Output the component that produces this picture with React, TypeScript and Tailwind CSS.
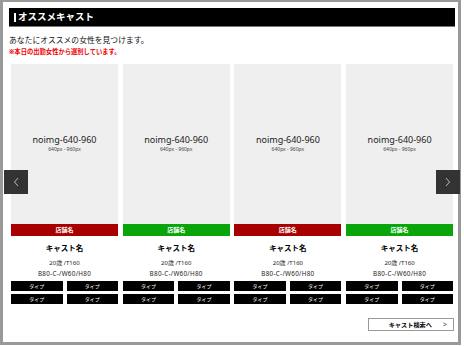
import React from "react";

const font = { fontFamily: '"Noto Sans", "Noto Sans CJK JP", sans-serif' };

function Card({ color }: { color: string }) {
  return (
    <div className="w-[107px] flex flex-col">
      <div className="h-[160px] bg-[#efefef] flex flex-col items-center pt-[70px]">
        <div className="text-[9px] leading-[12px] text-[#222]">noimg-640-960</div>
        <div className="text-[5px] leading-[7px] text-[#444] mt-[0px]">640px - 960px</div>
      </div>
      <div className={`h-[12px] ${color} text-white text-[6px] leading-[12px] font-bold text-center`}>店舗名</div>
      <div className="text-[7.5px] leading-[10px] font-bold text-center mt-[7px] text-black">キャスト名</div>
      <div className="text-[6px] leading-[10px] text-center mt-[5px] text-[#222]">20歳 /T160</div>
      <div className="text-[6.3px] leading-[10px] text-center mt-[1px] text-[#222] tracking-[0.3px]">B80-C-/W60/H80</div>
      <div className="grid grid-cols-2 gap-x-[4px] gap-y-[3px] mt-[2px]">
        {[0, 1, 2, 3].map((i) => (
          <div key={i} className="h-[10px] bg-black text-white text-[5px] leading-[10px] text-center">タイプ</div>
        ))}
      </div>
    </div>
  );
}

export default function App() {
  return (
    <div className="w-[464px] h-[346px] bg-white relative" style={font}>
      <div className="w-[461px] h-[345px] border-l-[3px] border-r-[3px] border-t-[2px] border-b-[3px] border-[#999] pl-[6px] pt-[6px]">
        <div className="w-[446px] h-[19px] bg-black border-b border-[#777] flex items-center pl-[5px]">
          <div className="w-[2px] h-[9px] bg-white mr-[2px]" />
          <div className="text-white text-[9.5px] font-bold leading-[14px]">オススメキャスト</div>
        </div>
        <div className="text-[7.8px] leading-[10px] text-[#111] mt-[8px]">あなたにオススメの女性を見つけます。</div>
        <div className="text-[6.3px] leading-[8px] font-bold text-[#e00] mt-[3px]">※本日の出勤女性から選別しています。</div>
        <div className="flex gap-[4.7px] ml-[2px] mt-[8px]">
          <Card color="bg-[#a80000]" />
          <Card color="bg-[#0aa50a]" />
          <Card color="bg-[#a80000]" />
          <Card color="bg-[#0aa50a]" />
        </div>
        <div className="flex justify-end pr-[4px] mt-[14px]">
          <div className="w-[86px] h-[13px] border border-[#999] bg-white flex items-center justify-end pr-[6px] gap-[11px]">
            <span className="text-[6.2px] font-bold leading-[10px] text-black">キャスト検索へ</span>
            <span className="text-[7px] leading-[10px] text-[#444]">&gt;</span>
          </div>
        </div>
      </div>
      <div className="absolute left-[4px] top-[170px] w-[24px] h-[24px] bg-[#333] flex items-center justify-center">
        <svg width="6" height="10" viewBox="0 0 6 10"><path d="M5 1 L1.5 5 L5 9" stroke="#bbb" strokeWidth="1" fill="none" /></svg>
      </div>
      <div className="absolute left-[436px] top-[170px] w-[24px] h-[24px] bg-[#333] flex items-center justify-center">
        <svg width="6" height="10" viewBox="0 0 6 10"><path d="M1 1 L4.5 5 L1 9" stroke="#bbb" strokeWidth="1" fill="none" /></svg>
      </div>
    </div>
  );
}
